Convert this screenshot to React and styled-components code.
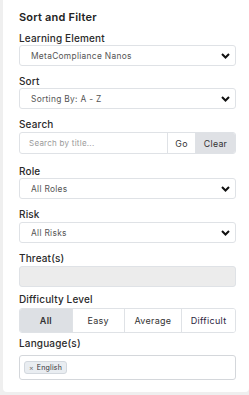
import React from "react";
import styled, { createGlobalStyle } from "styled-components";

const Global = createGlobalStyle`
  html, body { margin: 0; padding: 0; background: #efefef; }
  body { font-family: Inter, "Open Sans", sans-serif; }
  * { box-sizing: border-box; }
`;

const Page = styled.div`
  width: 249px;
  height: 395px;
  padding-left: 3px;
  overflow: hidden;
`;

const Panel = styled.div`
  background: #fff;
  height: 392px;
  border-radius: 0 0 4px 4px;
  padding: 10px 13px 0 16px;
  display: flex;
  flex-direction: column;
`;

const Title = styled.div`
  font-size: 11px;
  font-weight: 600;
  line-height: 14px;
  color: #222;
  letter-spacing: 0.2px;
`;

const Field = styled.div`
  display: flex;
  flex-direction: column;
  margin-top: ${(p) => p.$top}px;
  gap: ${(p) => p.$gap ?? 1}px;
`;

const Label = styled.div`
  font-size: 10px;
  font-weight: 500;
  line-height: 12px;
  color: #2a2a2a;
  letter-spacing: 0.15px;
`;

const Box = styled.div`
  height: ${(p) => p.$h || 21}px;
  border: 1px solid #dfe2e6;
  border-radius: 3px;
  background: ${(p) => (p.$disabled ? "#ececec" : "#fff")};
  display: flex;
  align-items: center;
`;

const SelectBox = styled(Box)`
  padding: 0 5px 0 11px;
  justify-content: space-between;
`;

const Value = styled.span`
  font-size: 8.4px;
  color: #555;
  letter-spacing: 0.3px;
`;

const Chevron = () => (
  <svg width="9" height="6" viewBox="0 0 9 6">
    <path d="M1 1 L4.5 4.5 L8 1" fill="none" stroke="#111" strokeWidth="2" />
  </svg>
);

const SearchGroup = styled(Box)`
  height: 22px;
  overflow: hidden;
  align-items: stretch;
`;

const SearchInput = styled.div`
  flex: 1;
  display: flex;
  align-items: center;
  padding-left: 9px;
  font-size: 8px;
  letter-spacing: 0.25px;
  color: #9a9a9a;
`;

const GroupBtn = styled.div`
  display: flex;
  align-items: center;
  justify-content: center;
  width: ${(p) => p.$w}px;
  font-size: 8.8px;
  letter-spacing: 0.25px;
  color: #333;
  border-left: 1px solid #dfe2e6;
  background: ${(p) => (p.$active ? "#dfe1e5" : "#fff")};
`;

const Segments = styled(Box)`
  height: 25px;
  overflow: hidden;
  align-items: stretch;
`;

const Segment = styled.div`
  flex: ${(p) => p.$w} 0 0;
  display: flex;
  align-items: center;
  justify-content: center;
  font-size: 9px;
  letter-spacing: 0.3px;
  font-weight: ${(p) => (p.$active ? 600 : 400)};
  color: ${(p) => p.$color || "#333"};
  background: ${(p) => (p.$active ? "#dde0e4" : "#fff")};
  & + & { border-left: 1px solid #dfe2e6; }
`;

const TagBox = styled(Box)`
  height: 25px;
  padding-left: 4px;
  border-color: #d4d7db;
`;

const Tag = styled.div`
  height: 13px;
  padding: 0 4px;
  display: flex;
  align-items: center;
  gap: 3px;
  font-size: 7px;
  letter-spacing: 0.2px;
  color: #333;
  background: #e9edf1;
  border: 1px solid #d3d8de;
  border-radius: 3px;
`;

const X = styled.span`
  font-size: 7px;
  color: #777;
`;

export default function App() {
  return (
    <>
      <Global />
      <Page>
        <Panel>
          <Title>Sort and Filter</Title>
          <Field $top={8}>
            <Label>Learning Element</Label>
            <SelectBox>
              <Value>MetaCompliance Nanos</Value>
              <Chevron />
            </SelectBox>
          </Field>
          <Field $top={9}>
            <Label>Sort</Label>
            <SelectBox>
              <Value>Sorting By: A - Z</Value>
              <Chevron />
            </SelectBox>
          </Field>
          <Field $top={9} $gap={2}>
            <Label>Search</Label>
            <SearchGroup>
              <SearchInput>Search by title...</SearchInput>
              <GroupBtn $w={28}>Go</GroupBtn>
              <GroupBtn $w={40} $active>Clear</GroupBtn>
            </SearchGroup>
          </Field>
          <Field $top={11}>
            <Label>Role</Label>
            <SelectBox>
              <Value>All Roles</Value>
              <Chevron />
            </SelectBox>
          </Field>
          <Field $top={9} $gap={2}>
            <Label>Risk</Label>
            <SelectBox>
              <Value>All Risks</Value>
              <Chevron />
            </SelectBox>
          </Field>
          <Field $top={9} $gap={2}>
            <Label>Threat(s)</Label>
            <Box $disabled />
          </Field>
          <Field $top={6} $gap={3}>
            <Label>Difficulty Level</Label>
            <Segments>
              <Segment $w={53} $active>All</Segment>
              <Segment $w={52}>Easy</Segment>
              <Segment $w={58}>Average</Segment>
              <Segment $w={54} $color="#2b2540">Difficult</Segment>
            </Segments>
          </Field>
          <Field $top={4} $gap={6}>
            <Label>Language(s)</Label>
            <TagBox>
              <Tag>
                <X>×</X>English
              </Tag>
            </TagBox>
          </Field>
        </Panel>
      </Page>
    </>
  );
}
